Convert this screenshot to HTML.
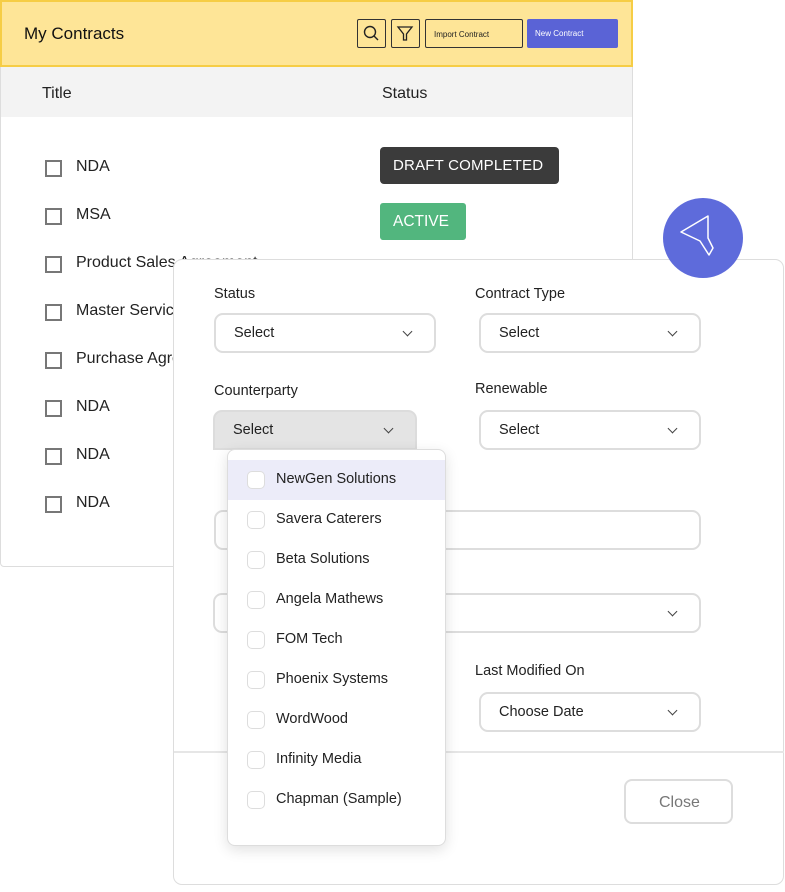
<!DOCTYPE html>
<html><head><meta charset="utf-8"><style>
*{box-sizing:border-box;margin:0;padding:0}
body{width:785px;height:892px;background:#fff;position:relative;overflow:hidden;font-family:"Liberation Sans",sans-serif;color:#222}
.a{position:absolute}
.card{left:0;top:0;width:633px;height:567px;border:1px solid #ddd;border-radius:0 0 4px 4px;background:#fff}
.hdr{left:0;top:0;width:633px;height:67px;background:#fee597;border:2px solid #f6cd45}
.cb{width:17px;height:17px;border:2px solid #777;background:#fff}
.rt{font-size:16px;color:#222}
.sel{border:2px solid #ddd;border-radius:9px;background:#fff;height:40px}
.sel span{position:absolute;left:18px;top:10px;font-size:14.5px;color:#222}
.chev{position:absolute;right:23px;top:13px;width:7px;height:7px;border-right:1.5px solid #444;border-bottom:1.5px solid #444;transform:rotate(45deg)}
.lbl{font-size:14.5px;color:#222}
.dcb{width:18px;height:18px;border:1.5px solid #ddd;border-radius:5px;background:#fff}
.it{font-size:14.5px;color:#222}
</style></head><body>
<div class="a card"></div>
<div class="a hdr"></div>
<div class="a" style="left:24px;top:24px;font-size:17px;color:#111">My Contracts</div>
<div class="a" style="left:357px;top:19px;width:29px;height:29px;border:1.5px solid #333;border-radius:2px">
<svg width="26" height="26" viewBox="0 0 26 26"><circle cx="12" cy="12" r="5.5" fill="none" stroke="#222" stroke-width="1.4"/><path d="M16 16l4 4" stroke="#222" stroke-width="1.4"/></svg></div>
<div class="a" style="left:391px;top:19px;width:29px;height:29px;border:1.5px solid #333;border-radius:2px">
<svg width="26" height="26" viewBox="0 0 26 26"><path d="M6 7h14l-5.5 7v6h-3v-6z" fill="none" stroke="#222" stroke-width="1.3"/></svg></div>
<div class="a" style="left:425px;top:19px;width:98px;height:29px;border:1.5px solid #333;border-radius:2px;font-size:8px;padding:10px 0 0 8px">Import Contract</div>
<div class="a" style="left:527px;top:19px;width:91px;height:29px;background:#5a63d6;border-radius:2px;font-size:8px;color:#fff;padding:10px 0 0 8px">New Contract</div>
<div class="a" style="left:1px;top:67px;width:631px;height:50px;background:#f3f3f3"></div>
<div class="a" style="left:42px;top:85px;font-size:16px">Title</div>
<div class="a" style="left:382px;top:85px;font-size:16px">Status</div>

<div class="a cb" style="left:45px;top:160px"></div><div class="a rt" style="left:76px;top:158px">NDA</div>
<div class="a cb" style="left:45px;top:208px"></div><div class="a rt" style="left:76px;top:206px">MSA</div>
<div class="a cb" style="left:45px;top:256px"></div><div class="a rt" style="left:76px;top:254px">Product Sales Agreement</div>
<div class="a cb" style="left:45px;top:304px"></div><div class="a rt" style="left:76px;top:302px">Master Service</div>
<div class="a cb" style="left:45px;top:352px"></div><div class="a rt" style="left:76px;top:350px">Purchase Agreement</div>
<div class="a cb" style="left:45px;top:400px"></div><div class="a rt" style="left:76px;top:398px">NDA</div>
<div class="a cb" style="left:45px;top:448px"></div><div class="a rt" style="left:76px;top:446px">NDA</div>
<div class="a cb" style="left:45px;top:496px"></div><div class="a rt" style="left:76px;top:494px">NDA</div>

<div class="a" style="left:380px;top:147px;width:179px;height:37px;background:#3b3b3b;border-radius:4px;color:#fff;font-size:15px;padding:10px 0 0 13px;letter-spacing:0.2px">DRAFT COMPLETED</div>
<div class="a" style="left:380px;top:203px;width:86px;height:37px;background:#52b67e;border-radius:3px;color:#fff;font-size:15.5px;padding:10px 0 0 13px">ACTIVE</div>

<div class="a" style="left:173px;top:259px;width:611px;height:626px;border:1.5px solid #ddd;border-radius:9px;background:#fff"></div>
<div class="a" style="left:174px;top:751px;width:610px;height:1.5px;background:#e6e6e6"></div>
<div class="a" style="left:663px;top:198px;width:80px;height:80px;border-radius:50%;background:#5e6bdb">
<svg width="80" height="80" viewBox="663 198 80 80"><path d="M708 216L681 232L700 241L709 255L713 248L708 238Z" fill="none" stroke="#fff" stroke-width="1.5" stroke-linejoin="round"/></svg></div>

<div class="a lbl" style="left:214px;top:286px">Status</div>
<div class="a sel" style="left:214px;top:313px;width:222px"><span>Select</span><i class="chev"></i></div>
<div class="a lbl" style="left:475px;top:286px">Contract Type</div>
<div class="a sel" style="left:479px;top:313px;width:222px"><span>Select</span><i class="chev"></i></div>
<div class="a lbl" style="left:214px;top:383px">Counterparty</div>
<div class="a sel" style="left:213px;top:410px;width:204px;background:#e4e4e4;border-color:#dcdcdc;border-radius:9px 9px 0 0"><span>Select</span><i class="chev"></i></div>
<div class="a lbl" style="left:475px;top:381px">Renewable</div>
<div class="a sel" style="left:479px;top:410px;width:222px"><span>Select</span><i class="chev"></i></div>
<div class="a sel" style="left:214px;top:510px;width:487px"></div>
<div class="a sel" style="left:213px;top:593px;width:488px"><i class="chev"></i></div>
<div class="a lbl" style="left:475px;top:663px">Last Modified On</div>
<div class="a sel" style="left:479px;top:692px;width:222px"><span>Choose Date</span><i class="chev"></i></div>
<div class="a" style="left:624px;top:779px;width:109px;height:45px;border:2px solid #ddd;border-radius:8px;font-size:16px;color:#777;padding:13px 0 0 33px">Close</div>

<div class="a" style="left:227px;top:449px;width:219px;height:397px;border:1.5px solid #ddd;border-radius:8px;background:#fff;box-shadow:0 4px 14px rgba(0,0,0,.12)"></div>
<div class="a" style="left:228px;top:460px;width:217px;height:40px;background:#ececf9"></div>
<div class="a dcb" style="left:247px;top:471px"></div><div class="a it" style="left:276px;top:471px">NewGen Solutions</div>
<div class="a dcb" style="left:247px;top:511px"></div><div class="a it" style="left:276px;top:511px">Savera Caterers</div>
<div class="a dcb" style="left:247px;top:551px"></div><div class="a it" style="left:276px;top:551px">Beta Solutions</div>
<div class="a dcb" style="left:247px;top:591px"></div><div class="a it" style="left:276px;top:591px">Angela Mathews</div>
<div class="a dcb" style="left:247px;top:631px"></div><div class="a it" style="left:276px;top:631px">FOM Tech</div>
<div class="a dcb" style="left:247px;top:671px"></div><div class="a it" style="left:276px;top:671px">Phoenix Systems</div>
<div class="a dcb" style="left:247px;top:711px"></div><div class="a it" style="left:276px;top:711px">WordWood</div>
<div class="a dcb" style="left:247px;top:751px"></div><div class="a it" style="left:276px;top:751px">Infinity Media</div>
<div class="a dcb" style="left:247px;top:791px"></div><div class="a it" style="left:276px;top:791px">Chapman (Sample)</div>
</body></html>
